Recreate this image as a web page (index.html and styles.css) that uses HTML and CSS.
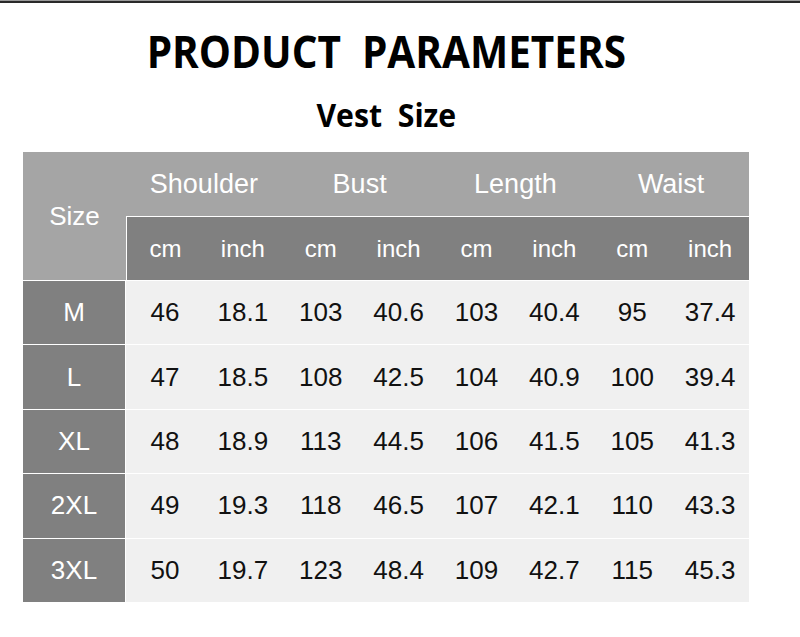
FILE: index.html
```html
<!DOCTYPE html>
<html>
<head>
<meta charset="utf-8">
<link rel="stylesheet" href="styles.css">
</head>
<body>
<div class="topline"></div>
<div class="page">
  <h1 class="title"><span class="title-text">PRODUCT&nbsp; PARAMETERS</span></h1>
  <h2 class="subtitle"><span class="subtitle-text">Vest&nbsp; Size</span></h2>
  <div class="table">
    <div class="cell size-head">Size</div>
    <div class="cell group">Shoulder</div>
    <div class="cell group">Bust</div>
    <div class="cell group">Length</div>
    <div class="cell group">Waist</div>
    <div class="cell unit first-unit">cm</div><div class="cell unit">inch</div>
    <div class="cell unit">cm</div><div class="cell unit">inch</div>
    <div class="cell unit">cm</div><div class="cell unit">inch</div>
    <div class="cell unit">cm</div><div class="cell unit">inch</div>

    <div class="cell size">M</div>
    <div class="cell data">46</div><div class="cell data">18.1</div>
    <div class="cell data">103</div><div class="cell data">40.6</div>
    <div class="cell data">103</div><div class="cell data">40.4</div>
    <div class="cell data">95</div><div class="cell data">37.4</div>

    <div class="cell size">L</div>
    <div class="cell data">47</div><div class="cell data">18.5</div>
    <div class="cell data">108</div><div class="cell data">42.5</div>
    <div class="cell data">104</div><div class="cell data">40.9</div>
    <div class="cell data">100</div><div class="cell data">39.4</div>

    <div class="cell size">XL</div>
    <div class="cell data">48</div><div class="cell data">18.9</div>
    <div class="cell data">113</div><div class="cell data">44.5</div>
    <div class="cell data">106</div><div class="cell data">41.5</div>
    <div class="cell data">105</div><div class="cell data">41.3</div>

    <div class="cell size">2XL</div>
    <div class="cell data">49</div><div class="cell data">19.3</div>
    <div class="cell data">118</div><div class="cell data">46.5</div>
    <div class="cell data">107</div><div class="cell data">42.1</div>
    <div class="cell data">110</div><div class="cell data">43.3</div>

    <div class="cell size">3XL</div>
    <div class="cell data">50</div><div class="cell data">19.7</div>
    <div class="cell data">123</div><div class="cell data">48.4</div>
    <div class="cell data">109</div><div class="cell data">42.7</div>
    <div class="cell data">115</div><div class="cell data">45.3</div>
  </div>
</div>
</body>
</html>
```
FILE: styles.css
```css
html, body {
  margin: 0;
  padding: 0;
  background: #ffffff;
}
body {
  font-family: "Liberation Sans", Arial, sans-serif;
}
.topline {
  height: 1px;
  background: #9a9a9a;
  border-bottom: 2px solid #2a2a2a;
}
.page {
  width: 726px;
  margin-left: 23px;
}
.title {
  margin: 0;
  height: 80px;
  display: flex;
  justify-content: center;
  align-items: flex-start;
}
.title-text {
  display: inline-block;
  font-family: "Open Sans", "DejaVu Sans", sans-serif;
  font-weight: 700;
  font-size: 45px;
  line-height: 1;
  color: #000;
  margin-top: 25px;
  transform: scaleX(0.9);
}
.subtitle {
  margin: 0;
  height: 69px;
  display: flex;
  justify-content: center;
  align-items: flex-start;
}
.subtitle-text {
  display: inline-block;
  font-family: "Open Sans", "DejaVu Sans", sans-serif;
  font-weight: 700;
  font-size: 33px;
  line-height: 1;
  color: #000;
  margin-top: 15px;
  transform: scaleX(0.915);
}
.table {
  display: grid;
  grid-template-columns: 103px repeat(8, 1fr);
  grid-template-rows: 64px 63px repeat(5, 63.4px);
  row-gap: 1px;
  background: #ffffff;
}
.cell {
  display: flex;
  align-items: center;
  justify-content: center;
  font-size: 26px;
}
.size-head {
  grid-row: 1 / span 2;
  background: #a5a5a5;
  color: #fff;
}
.group {
  grid-column: span 2;
  background: #a5a5a5;
  color: #fff;
  font-size: 27px;
}
.unit {
  background: #808080;
  color: #fff;
  font-size: 24px;
}
.first-unit {
  margin-left: 1px;
}
.size {
  background: #808080;
  color: #fff;
  margin-right: 1px;
}
.data {
  background: #f0f0f0;
  color: #111;
}
```
